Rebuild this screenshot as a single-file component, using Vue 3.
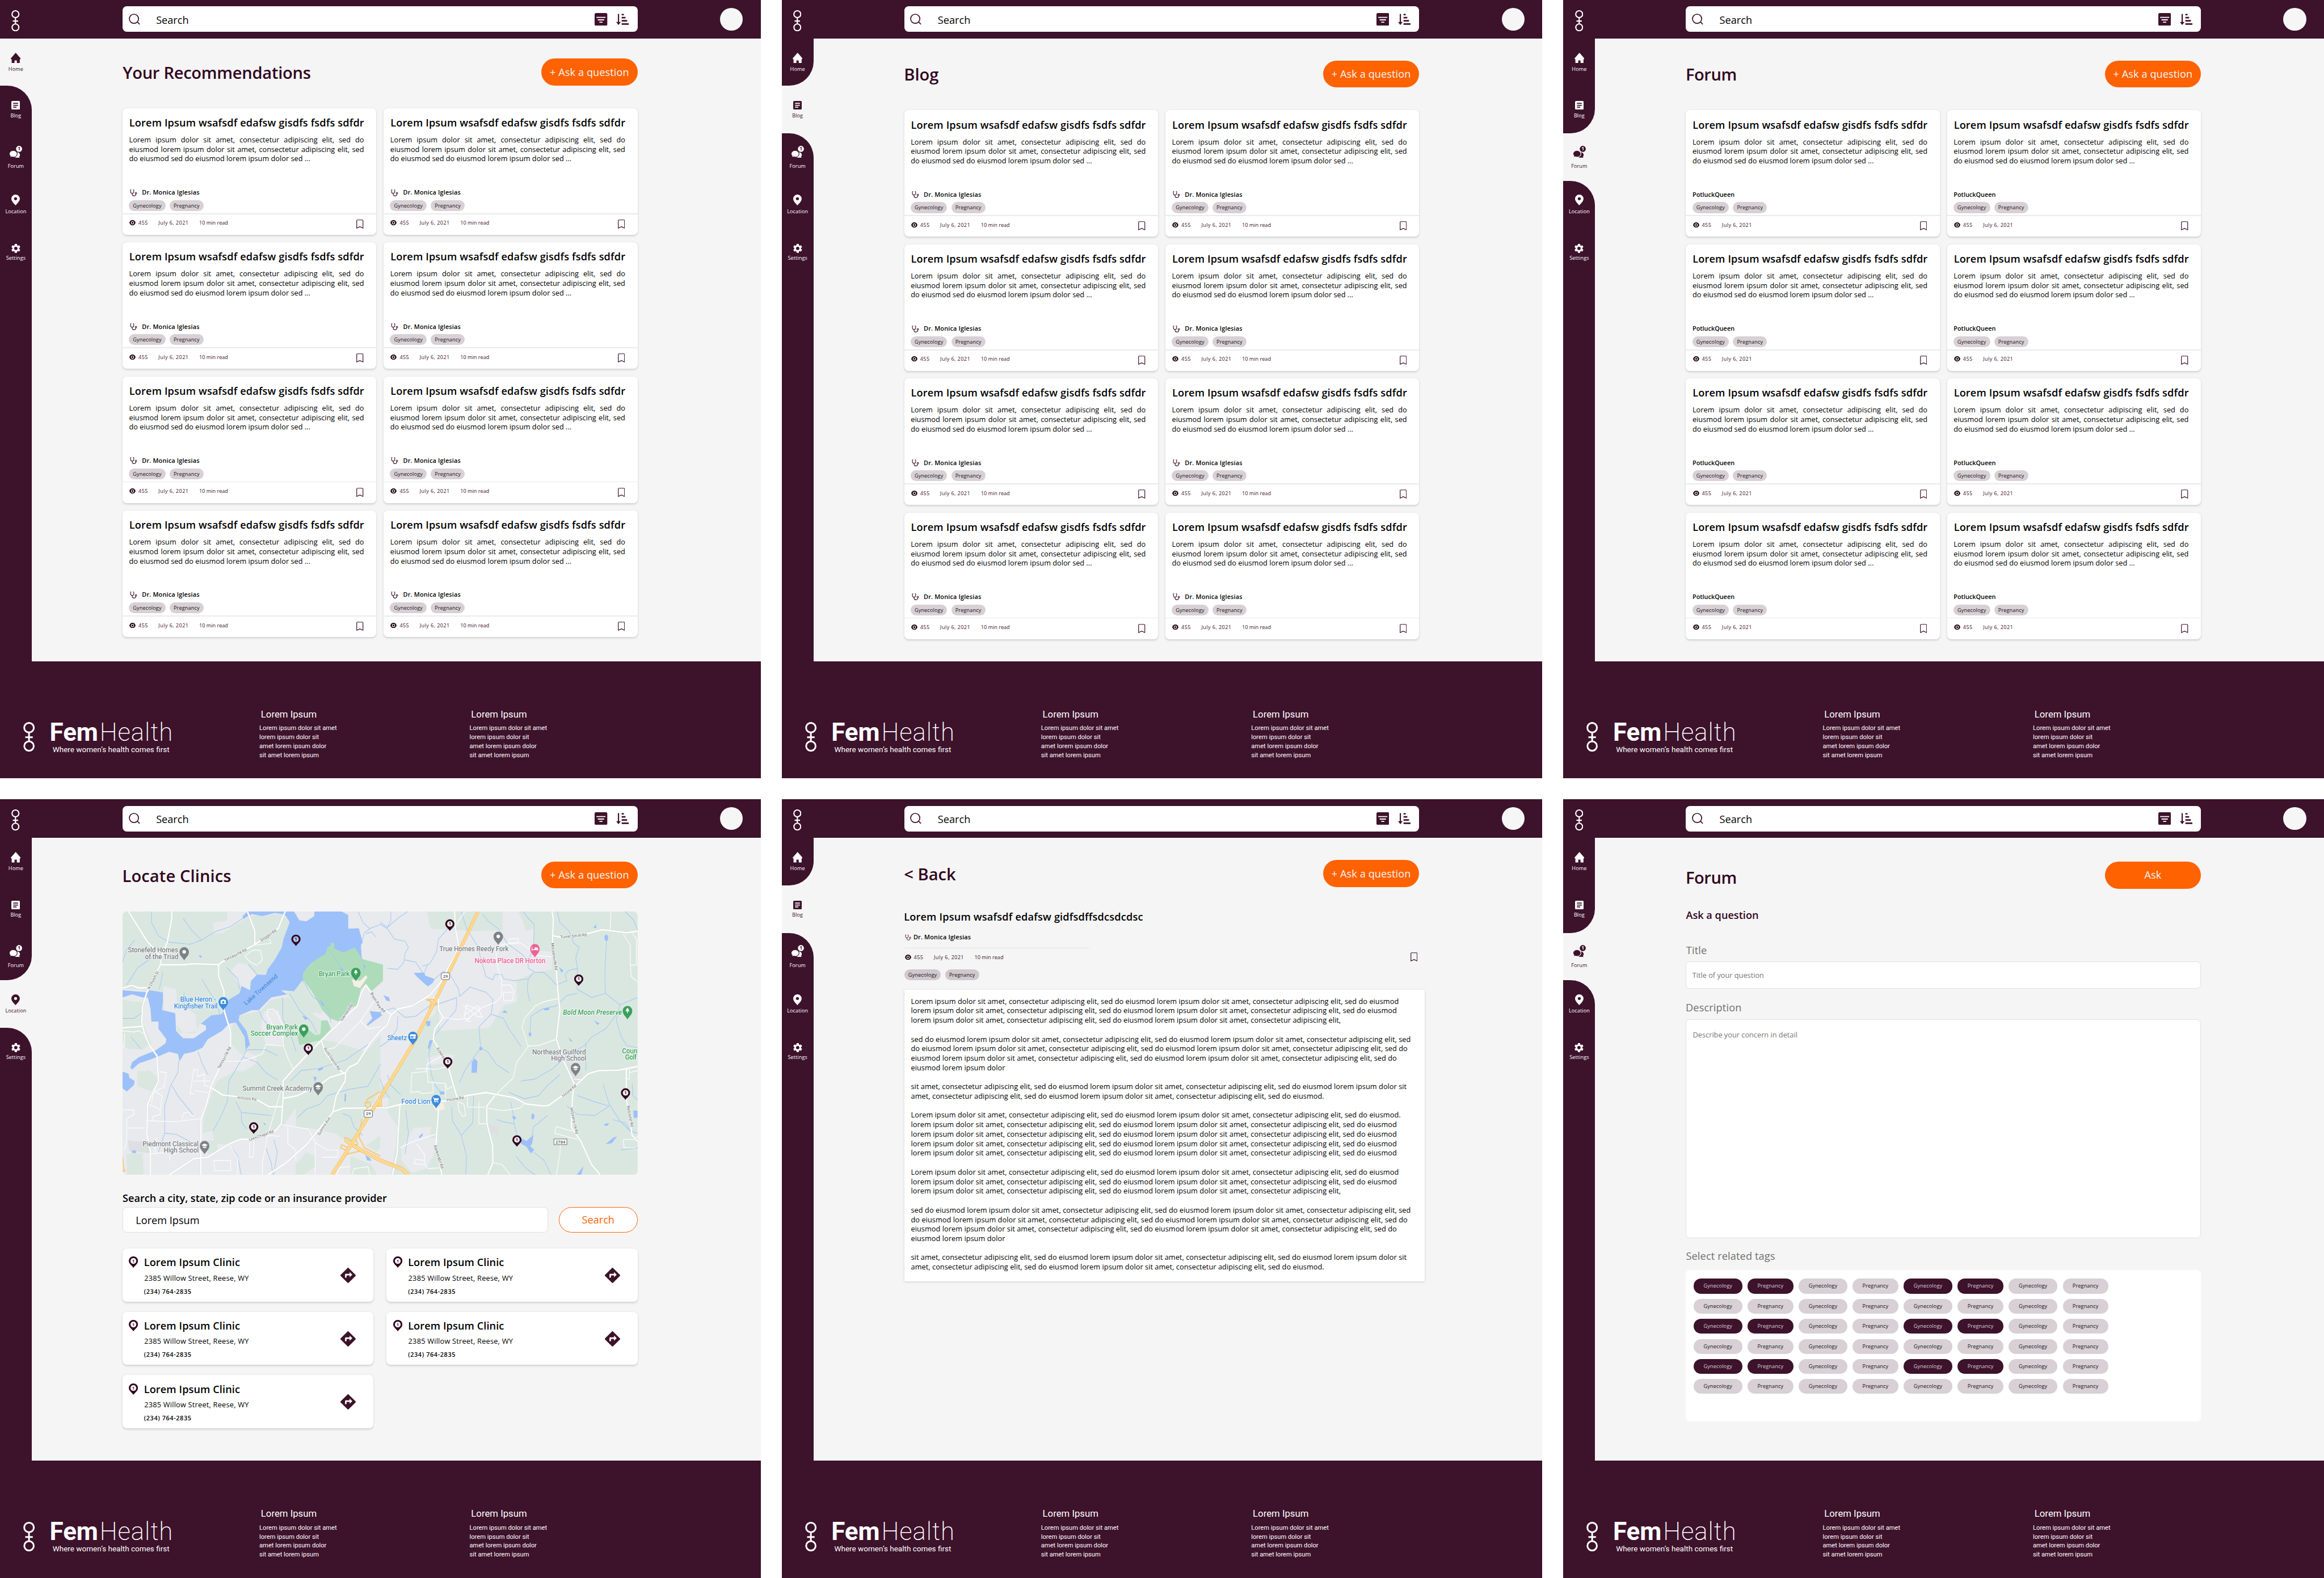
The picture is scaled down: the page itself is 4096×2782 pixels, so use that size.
<script setup>
const nav = [
  { key: 'home', label: 'Home' },
  { key: 'blog', label: 'Blog' },
  { key: 'forum', label: 'Forum' },
  { key: 'location', label: 'Location' },
  { key: 'settings', label: 'Settings' },
]

const screens = [
  { view: 'cards', active: 0, title: 'Your Recommendations', action: '+ Ask a question', doctor: true, mod: 'home' },
  { view: 'cards', active: 1, title: 'Blog', action: '+ Ask a question', doctor: true, mod: 'blog' },
  { view: 'cards', active: 2, title: 'Forum', action: '+ Ask a question', doctor: false, mod: 'forum' },
  { view: 'locate', active: 3, title: 'Locate Clinics', action: '+ Ask a question', mod: 'locate' },
  { view: 'article', active: 1, title: '< Back', action: '+ Ask a question', mod: 'article' },
  { view: 'ask', active: 2, title: 'Forum', action: 'Ask', mod: 'ask' },
]

const cardLines = [
  'Lorem ipsum dolor sit amet, consectetur adipiscing elit, sed do',
  'eiusmod lorem ipsum dolor sit amet, consectetur adipiscing elit, sed',
  'do eiusmod sed do eiusmod lorem ipsum dolor sed ...',
]

const core = 'ipsum dolor sit amet, consectetur adipiscing elit,'
const blockA = [
  `Lorem ${core} sed do eiusmod lorem ${core} sed do eiusmod`,
  `lorem ${core} sed do eiusmod lorem ${core} sed do eiusmod`,
  `lorem ${core} sed do eiusmod lorem ${core}`,
]
const blockB = [
  `sed do eiusmod lorem ${core} sed do eiusmod lorem ${core} sed`,
  `do eiusmod lorem ${core} sed do eiusmod lorem ${core} sed do`,
  `eiusmod lorem ${core} sed do eiusmod lorem ${core} sed do`,
  'eiusmod lorem ipsum dolor',
]
const blockC = [
  `sit amet, consectetur adipiscing elit, sed do eiusmod lorem ${core} sed do eiusmod lorem ipsum dolor sit`,
  `amet, consectetur adipiscing elit, sed do eiusmod lorem ${core} sed do eiusmod.`,
]
const blockD = [`${blockA[0]}.`, blockA[1], blockA[1], blockA[1], blockA[1]]
const article = [blockA, blockB, blockC, blockD, blockA, blockB, blockC].map((b) => b.join('\n'))

const clinics = 5
const tagRows = 6
const isPicked = (row, col) => row % 2 === 0 && col % 4 < 2

const footerLinks = ['Lorem ipsum dolor sit amet', 'lorem ipsum dolor sit', 'amet lorem ipsum dolor', 'sit amet lorem ipsum']

/* The map is drawn on a survey grid; these turn grid units into map pixels. */
const mx = (x) => x / 3 - 12
const my = (y) => y * 0.39541 - 106
const at = (x, y, r = 0) => `translate(${mx(x).toFixed(1)} ${my(y).toFixed(1)}) rotate(${r})`

const green = [
  'M36 268H630V312L552 320 552 372 600 374 720 310 760 290 970 275 985 320 955 400 945 450 860 545 850 572 800 570 765 640 710 625 700 660 640 690 600 760 545 765 480 800 450 850 350 850 335 755 260 740 265 655 190 650 100 640 36 640Z',
  'M36 690 90 700 160 700 140 780 200 900 150 930 60 925 36 890Z',
  'M120 1035 190 1030 232 1060 232 1090 200 1130 120 1105Z',
  'M60 1430 150 1425 155 1530 60 1530Z',
  'M700 765 820 745 880 690 970 680 1130 690 1120 760 1180 800 1165 885 1230 890 1420 940 1500 860 1500 1120 1440 1220 1330 1380 1240 1330 1130 1310 1020 1300 1020 1210 950 1290 900 1320 780 1360 700 1360 640 1385 560 1380 545 1320 490 1330 500 1240 570 1080 680 1030 720 960 650 900 655 820Z',
  'M520 1365 575 1365 575 1420 520 1430Z',
  'M1765 268H2195V358L2025 362 1785 350Z',
  'M2285 268H2961V1530H1560L1590 1380 1600 1300 1540 1230 1550 1160 1500 1160 1600 1010 1760 790 1810 760 1830 690 1840 840 2120 825 2200 720 2275 700 2275 600 2370 560 2475 545 2475 460 2370 455 2370 350 2330 362Z',
  'M1500 1170 1560 1150 1600 1120 1600 1060 1500 1110Z',
  'M1500 1340 1500 1400 1480 1420 1420 1390Z',
  'M1020 1480 1080 1420 1130 1440 1130 1490 1060 1530 1020 1530Z',
  'M1330 1440 1450 1480 1480 1530 1330 1530Z',
  'M1060 600 1100 650 1130 690 1170 740 1160 760 1090 740 1000 690 960 660Z',
]
const gray = [
  'M268 625 340 640 345 700 450 760 460 840 380 850 270 740Z',
  'M690 515 740 520 800 575 765 640 700 620 650 555Z',
  'M690 960 750 940 800 960 790 1000 720 1035 680 1030Z',
  'M1690 1305 1790 1300 1780 1350 1830 1360 1800 1440 1760 1500 1680 1520 1620 1460 1620 1400Z',
  'M1500 1230 1550 1240 1600 1310 1560 1360 1500 1350Z',
  'M1765 970 1850 950 1925 955 1900 990 1770 1005Z',
  'M840 745 920 740 950 810 950 905 850 905 820 820Z',
]
const pale = ['M65 1365 195 1375 190 1425 75 1415Z', 'M2555 985 2650 1050 2600 1095 2560 1030Z', 'M2115 1288 2170 1300 2170 1335 2115 1330Z']

const lake =
  'M718 290 745 268H1010L1040 310 1080 315 1125 290V268H1280L1318 285V350L1378 348 1400 415 1390 430 1395 500 1390 560 1300 620 1150 600 1055 600 1010 650 935 645 970 665 880 680 810 740 770 740 700 765 695 790 740 840 760 905 735 930 730 870 680 800 640 805 600 840 520 880 490 920 440 940 385 950 360 985 350 950 300 940 245 960 200 975 130 995 90 1025 80 1015 90 990 130 965 220 935 280 900 285 880 240 830 240 795 200 795 195 735 180 680 150 680 90 665 36 680V645L100 650 180 655 190 645 265 655 265 705 260 740 335 755 340 840 380 875 440 875 510 835 510 815 480 805 540 765 600 760 640 690 700 660 712 625 760 645 765 600 800 570 850 572 860 545 900 500 940 440 950 400 985 320 965 290 945 280 900 275 830 290 770 280 720 305Z'
const ponds = [
  'M36 1035 70 1045 75 1065 105 1080 100 1100 60 1130 36 1115Z',
  'M1422 810 1455 780 1440 745 1500 750 1510 765 1460 795 1430 815Z',
  'M1690 562 1750 560 1755 575 1810 592 1795 612 1770 627 1740 605 1705 578Z',
  'M2290 1350 2330 1367 2370 1338 2362 1380 2352 1392 2375 1410 2355 1427 2330 1395 2300 1380Z',
  'M2020 990 2035 972 2052 985 2048 1040 2018 1040Z',
  'M2773 385 2785 377 2795 390 2790 410 2775 405Z',
  'M2780 1382 2815 1378 2845 1345 2825 1350Z',
  'M2615 1530 2655 1487 2640 1530Z',
  'M2937 1222 2961 1222V1255L2940 1257Z',
  'M1780 885 1797 885 1775 930 1770 920Z',
  'M1758 794 1785 792 1783 815 1765 818Z',
  'M1518 668 1550 680 1555 698 1535 695Z',
  'M2190 752 2208 740 2225 755Z',
  'M2425 735 2460 728 2460 738 2435 742Z',
  'M2712 790 2745 803 2735 812Z',
  'M2568 870 2592 888 2580 890Z',
  'M2344 848 2358 848 2356 866 2343 864Z',
  'M1415 1435 1440 1448 1450 1462 1425 1460Z',
  'M1145 1022 1175 1012 1172 1025 1150 1032Z',
  'M1120 1058 1140 1062 1128 1085Z',
  'M1055 765 1090 778 1075 788Z',
  'M1160 690 1185 720 1165 715Z',
  'M1270 535 1290 545 1285 565Z',
  'M1402 524 1418 528 1410 542Z',
  'M88 1414 112 1412 112 1426 90 1424Z',
  'M467 480 485 478 483 492Z',
  'M835 1280 850 1285 842 1293Z',
  'M1298 1140 1306 1142 1304 1180 1296 1176Z',
  'M1835 1130 1860 1130 1868 1142 1842 1146Z',
  'M1720 1345 1742 1328 1740 1342 1722 1356Z',
  'M2360 1235 2375 1240 2373 1262 2358 1262Z',
  'M2248 1250 2262 1247 2272 1258 2260 1266Z',
  'M2772 1285 2798 1282 2792 1294 2775 1294Z',
  'M2710 345 2725 330 2728 348Z',
  'M2515 535 2540 550 2530 562Z',
  'M2062 918 2078 916 2078 932 2064 932Z',
]
const park =
  'M1060 565 1100 520 1150 490 1190 470 1200 440 1218 430 1222 416 1238 420 1238 445 1290 465 1355 440 1385 480 1395 495 1460 510 1515 522V600L1490 620 1450 650 1418 615 1390 640 1372 715 1320 740 1265 795 1215 780 1170 740 1110 650 1060 595Z'
const soccer = 'M1028 860 1080 825 1130 860 1160 855 1165 790 1200 790 1220 830 1160 885 1040 907Z'
const sands = ['M1338 592 1385 600 1418 573 1427 583 1385 635 1350 625Z', 'M1800 1180 1860 1185 1865 1215 1820 1225 1798 1200Z']

const streams = [
  '200,268 200,320 240,385 300,415 420,425 485,405 560,365 650,340 720,300',
  '380,300 430,360 485,405',
  '36,510 60,450 105,405',
  '60,620 120,540 200,490 240,475',
  '265,560 245,640',
  '36,780 100,780 150,750',
  '85,870 140,925',
  '485,590 520,640 560,690 590,760',
  '625,535 690,590 700,640',
  '750,520 800,570',
  '385,655 385,720',
  '740,930 720,965 640,1080 630,1180 600,1240 550,1320',
  '740,930 850,930 920,960',
  '720,965 800,990 850,1040 915,1075',
  '680,1180 710,1230 880,1245',
  '710,1230 712,1275 740,1310',
  '355,985 350,1040 310,1100 275,1200 275,1330 240,1420',
  '315,1100 350,1150 435,1240',
  '275,1330 340,1335 420,1370',
  '990,1080 1050,1030 1150,1020 1300,980 1440,900',
  '1030,1255 1080,1215 1160,1190 1200,1150 1320,1120 1430,1105 1500,1000',
  '465,940 490,1000 520,1050',
  '1060,600 1120,680 1180,710 1210,760 1220,800',
  '945,680 945,780 1000,880 1022,940',
  '985,660 1040,740 1110,800 1140,850',
  '810,740 830,780 880,830',
  '1200,450 1240,490 1290,550',
  '1390,480 1410,530 1405,560',
  '1375,268 1400,320 1440,350 1500,330',
  '1440,350 1410,370 1395,410',
  '1420,375 1450,365 1475,390',
  '655,1400 690,1440 710,1530',
  '850,1400 880,1470 890,1530',
  '895,1360 915,1420 895,1530',
  '1285,1235 1330,1250 1350,1300 1400,1340',
  '1500,330 1540,350 1580,400 1640,410 1660,440 1640,470 1635,510 1600,545 1540,540',
  '1560,268 1560,310 1540,345 1500,320',
  '1540,345 1600,300 1655,268',
  '1640,500 1700,510 1740,560',
  '1770,520 1750,560',
  '1895,340 1830,400 1820,460 1780,520 1740,530',
  '1810,590 1860,555 1900,575 1945,640 1950,675 2010,630 2100,655 2140,690 2130,760 2060,820 2070,920 2110,940 2160,1000 2230,1040',
  '1960,268 1990,350 2050,430 2080,520 2100,580 2140,595 2150,570 2190,570 2200,590 2260,600 2340,590 2370,560',
  '2080,280 2120,320 2170,350 2220,420 2300,470 2340,500 2340,540 2380,560 2430,560 2470,590 2500,620 2560,600 2550,570 2570,550 2620,540 2610,490 2630,440 2600,420 2570,360 2520,320 2505,268',
  '2310,268 2340,300 2375,330 2370,450 2340,500',
  '2340,590 2335,640 2348,700',
  '2620,540 2618,640 2700,680 2780,660 2860,715 2961,680',
  '2780,660 2775,580 2785,400',
  '2860,715 2840,790 2870,870 2900,910 2961,920',
  '2860,740 2780,830 2700,870 2660,910 2560,960 2480,1020 2380,1070 2300,1080',
  '2350,850 2355,770 2420,735 2500,720 2560,670 2620,660',
  '1500,750 1575,730 1640,775 1700,770 1780,720 1850,705 1935,680',
  '1935,680 1930,740 1800,870 1775,950 1790,1050 1810,1100 1850,1140',
  '1600,770 1595,830 1560,880 1500,915',
  '2130,760 2200,780 2230,830 2300,915',
  '2070,920 1980,1030 1950,1090',
  '1905,1205 1910,1270 1960,1340 1990,1440 1985,1530',
  '2030,1150 2025,1280 1960,1340',
  '2160,1265 2200,1275 2260,1285 2280,1350',
  '2240,1180 2255,1240 2260,1285',
  '2450,1245 2370,1300 2360,1360',
  '2230,1135 2320,1165 2400,1150 2450,1100 2520,1050',
  '2560,1200 2620,1240 2720,1245 2800,1200',
  '2620,1150 2720,1180 2800,1200',
  '2765,1095 2800,1190 2860,1270 2920,1320 2961,1330',
  '2270,1440 2330,1500 2380,1530',
  '2370,1420 2430,1460 2470,1530',
  '2930,1090 2935,1150 2961,1170',
  '2820,1265 2890,1280 2930,1330',
  '2865,1410 2961,1400',
  '1645,1220 1660,1330 1640,1430',
  '2890,268 2940,310 2961,355',
  '1500,1070 1520,1120 1555,1165',
  '1540,1050 1560,1100 1615,1145',
  '2668,900 2668,1030',
]

const minor = [
  '36,840 95,845 130,840 160,855 165,870',
  '36,915 45,915 48,850',
  '620,985 720,985 800,960 830,950 850,905 950,912 980,980 1005,1020',
  '950,912 945,810 910,750 890,735 860,738 858,765 900,830 950,870',
  '730,480 760,510 800,525 830,500 820,455 780,452 730,480',
  '780,430 880,420 870,400',
  '180,1190 250,1215 250,1240 210,1250 205,1275',
  '245,1035 285,1040 270,1110 215,1130 200,1185',
  '215,1130 260,1150 252,1215',
  '440,1140 420,1140 440,1025 460,1025 460,1060 500,1045 502,1100 540,1110',
  '440,1080 535,1080',
  '445,1125 520,1135',
  '175,1270 330,1275 480,1260',
  '375,1265 380,1235 410,1228 435,1250',
  '36,1218 100,1218 102,1238 60,1260 60,1370 45,1410',
  '60,1305 165,1305',
  '220,1430 220,1380 230,1350',
  '190,1430 300,1420 340,1430',
  '305,1460 305,1420',
  '940,1290 1020,1300 1090,1310 1130,1370 1130,1530',
  '975,1300 975,1380 1020,1410 1020,1460',
  '830,1530 830,1470 860,1340 930,1345',
  '640,1382 690,1450 690,1530',
  '760,1365 755,1445 780,1445 782,1365',
  '555,1460 650,1460 650,1510 560,1510 555,1460',
  '1130,1375 1200,1410 1260,1410 1255,1445 1170,1445',
  '1390,790 1300,870 1240,920 1190,930',
  '1390,790 1470,690',
  '1385,790 1430,830 1500,820',
  '1250,1530 1270,1495 1330,1490',
  '1340,1530 1350,1500 1430,1490 1440,1530',
  '860,1340 910,1200 950,1080',
  '1858,775 1930,785 2010,780',
  '1970,715 2050,770 2080,775 2060,740 1990,715 1975,780',
  '1975,765 2050,720 2070,735 1985,790 2015,795',
  '2155,440 2165,530 2190,600 2190,670 2160,700 2060,735',
  '2155,440 2200,425 2300,420 2350,450 2400,480 2475,485',
  '2230,420 2235,400 2285,397 2285,415 2230,420',
  '2190,620 2240,620 2260,650 2250,695 2200,695 2200,650',
  '2200,655 2255,655',
  '2510,685 2430,700 2380,720 2320,780 2305,820 2340,915 2275,990 2255,1065 2150,1150',
  '2340,912 2400,910 2500,880',
  '1672,1135 1680,1040 1760,1035 1762,1020 1700,1022',
  '1672,1135 1710,1130 1740,1140 1800,1135 1800,1080',
  '1770,1085 1870,1092 1880,1120 1910,1105',
  '1770,1020 1800,1025 1870,1015',
  '1770,1085 1765,1000 1850,960',
  '1870,1092 1870,1160',
  '1995,1155 1995,1205 2100,1205',
  '2060,1180 2060,1285 2105,1285',
  '1940,1180 1945,1220 1970,1250 1985,1245 1975,1190 1940,1180',
  '2105,1210 2200,1222 2290,1210 2320,1190',
  '2490,1330 2500,1298 2590,1320',
  '2490,1330 2620,1360',
  '2525,1355 2520,1430 2500,1530',
  '1610,1400 1700,1365 1815,1335',
  '1705,1380 1750,1430 1755,1480 1690,1475 1700,1455 1750,1460',
  '1755,1480 1770,1500 1850,1495',
  '2810,268 2805,355',
  '2880,375 2920,430 2920,520 2925,580 2961,605',
  '2920,525 2955,525 2955,400 2930,370',
  '2897,1020 2915,1025 2915,1070 2897,1070',
  '2915,1040 2961,1030',
  '2880,1360 2940,1360 2961,1345',
  '2880,1360 2885,1400 2950,1400',
  '2600,1070 2650,1075',
  '2140,1470 2190,1480 2240,1530',
  '1925,340 1980,268',
]
const major = [
  '316,268 316,300 290,415 262,470 250,525 180,640 150,720 145,800 160,850 190,910 232,960 240,1080 178,1190 175,1340 195,1420 195,1530',
  '70,268 175,410 245,475',
  '960,268 920,350 780,430 600,510 582,522 582,580 612,650 612,740 650,845 650,910 540,1100 510,1200 482,1260 480,1530',
  '250,523 380,523 440,518 582,522',
  '745,268 787,360 787,425',
  '36,635 90,622 130,635 185,632',
  '36,825 150,818',
  '540,1112 605,1147 690,1155 800,1170 868,1203 948,1203',
  '300,1530 440,1452 520,1445 640,1382 700,1360 780,1358 905,1318 938,1285 948,1160 948,1080 1010,1020 1165,885 1370,720 1390,660 1418,620 1500,720 1565,765',
  '1165,885 1185,940 1240,1005 1290,1042',
  '860,1530 960,1475 1080,1385 1230,1230 1250,1150 1300,1080 1303,1040 1320,1015 1370,995 1440,900 1500,840 1540,810 1560,765 1600,735 1680,720 1780,670 1840,610 1930,470 1945,430 1925,340 1922,268',
  '950,1163 1030,1150 1170,1090 1215,1062 1303,1040',
  '1230,1228 1290,1210 1540,1208 1620,1190 1800,1180 1880,1175 1990,1150 2100,1135 2260,1160 2330,1190 2430,1200 2460,1195 2600,1110 2680,1045 2740,1030 2850,1028 2961,1010',
  '2475,268 2483,300 2478,420 2495,500 2510,660 2520,740 2500,880 2540,980 2600,1090 2590,1180 2585,1300 2640,1370 2700,1480 2750,1530',
  '2483,385 2530,392 2650,380 2760,355 2900,370 2961,362',
  '1800,680 1830,690 1832,740 1858,775 1810,830 1800,880 1850,950 1885,1010 1940,1170',
  '1832,1210 1815,1390 1850,1530',
  '1612,1190 1595,1430 1568,1530',
  '2110,1530 2140,1470 2138,1390 2105,1280 2105,1200 2150,1150',
  '2897,1020 2897,1160 2930,1340 2961,1370',
]
const highway = [
  '2055,268 1930,490 1800,715 1700,880 1500,1160 1440,1240 1330,1390 1225,1530',
  '1500,1150 1500,1205',
  '1310,1370 1400,1415 1500,1460 1620,1500 1660,1530',
]
const ramps = [
  'M1500 1130 1430 1165 1412 1190 1425 1210 1445 1200 1440 1180 1420 1185',
  'M1500 1170 1475 1180 1480 1200 1500 1195',
  'M1350 1370 1300 1350 1300 1370 1340 1385 1370 1385 1365 1365 1345 1362',
  'M1320 1400 1280 1385 1275 1400 1300 1410 1335 1395',
  'M1395 1260 1380 1350 1410 1400 1500 1440',
  'M1270 1480 1310 1430 1400 1412',
  'M1760 690 1800 690 1825 712 1780 730 1790 700 1760 690',
  'M36 1440 42 1500 50 1510 36 1510',
]

const places = [
  [66, 464, 286, 'Stonefeld Homes', 'slate'],
  [163, 496, 190, 'of the Triad', 'slate'],
  [363, 701, 203, 'Blue Heron -', 'azure'],
  [328, 732, 247, 'Kingfisher Trail', 'azure'],
  [1150, 579, 176, 'Bryan Park', 'leaf'],
  [852, 832, 180, 'Bryan Park', 'leaf'],
  [763, 864, 270, 'Soccer Complex', 'leaf'],
  [717, 1126, 397, 'Summit Creek Academy', 'slate'],
  [150, 1393, 318, 'Piedmont Classical', 'slate'],
  [270, 1424, 199, 'High School', 'slate'],
  [1835, 457, 394, 'True Homes Reedy Fork', 'slate'],
  [2036, 516, 402, 'Nokota Place DR Horton', 'rose'],
  [2538, 762, 334, 'Bold Moon Preserve', 'leaf slant'],
  [2363, 952, 305, 'Northeast Guilford', 'slate'],
  [2470, 983, 200, 'High School', 'slate'],
  [2873, 946, 87, 'Coun', 'leaf'],
  [2890, 977, 66, 'Golf', 'leaf'],
  [1539, 884, 112, 'Sheetz', 'azure'],
  [1619, 1188, 165, 'Food Lion', 'azure'],
]
const roadNames = [
  [190, 642, 37.6, -62, 'N Church St'],
  [617, 507, 46.5, -26, 'Yanceyville Rd'],
  [825, 412, 35, -34, 'Doggett Rd'],
  [588, 1022, 45.6, -62, 'Yanceyville Rd'],
  [688, 1165, 36, 6, 'Hillcroft Rd'],
  [757, 1367, 48.7, -19, 'Lees Chapel Rd'],
  [1280, 797, 39.6, -55, 'Townsend Rd'],
  [1443, 660, 34, 60, 'Bryan Park'],
  [1178, 925, 50, 56, 'Rudd Station Rd'],
  [1155, 1342, 39, -58, 'Summit Ave'],
  [2523, 397, 50, -5, 'Turner Smith Rd'],
  [2470, 420, 52, 82, 'McLeansville Rd'],
  [2578, 1208, 51, 78, 'McLeansville Rd'],
  [1878, 1177, 32.5, -8, 'Hicone Rd'],
  [2540, 1158, 32.7, -40, 'Hicone Rd'],
  [1818, 925, 26, 56, 'Eckerso'],
  [2900, 1200, 40.5, 79, 'Redcedar Rd'],
  [1803, 1390, 45.7, 72, 'Rankin Mill Rd'],
  [1500, 738, 9, 40, 'Rd'],
]
const pois = [
  [386, 503, 'slate', 'dot'],
  [608, 742, 'azure', 'camera'],
  [1361, 602, 'leaf', 'tree'],
  [1065, 873, 'leaf', 'dot'],
  [1147, 1150, 'slate', 'school'],
  [502, 1431, 'slate', 'school'],
  [2170, 429, 'slate', 'dot'],
  [2378, 488, 'rose', 'bed'],
  [2904, 785, 'leaf', 'tree'],
  [2609, 1058, 'slate', 'school'],
  [1685, 908, 'azure', 'shop'],
  [1817, 1211, 'azure', 'cart'],
]
const pins = [[1021, 434], [1091, 956], [781, 1333], [1895, 361], [2627, 625], [1883, 1021], [2276, 1395], [2893, 1170]]
</script>

<template>
  <div class="board">
    <section v-for="(s, si) in screens" :key="si" class="screen">
      <header class="topbar">
        <svg class="topbar__logo" viewBox="0 0 15.6 40">
          <g fill="none" stroke="currentColor" stroke-width="2.3">
            <circle cx="7.8" cy="7.6" r="6.5" /><circle cx="7.8" cy="32.5" r="6.4" />
            <path d="M7.8 14.5V26M2.7 20.5H12.9" />
          </g>
        </svg>
        <div class="search">
          <svg class="search__glass" viewBox="0 0 22 22">
            <g fill="none" stroke="currentColor" stroke-width="1.9"><circle cx="10" cy="10" r="8.9" /><path d="M16.8 16.4 21 20.8" /></g>
          </svg>
          <span class="search__text">Search</span>
          <svg class="search__filter" viewBox="0 0 24 24">
            <rect width="24" height="24" rx="2.6" fill="currentColor" />
            <path d="M3.4 8.2H20.6M6 12.9H18M9 17.4H15" stroke="#fff" stroke-width="2" />
          </svg>
          <svg class="search__sort" viewBox="0 0 24 22">
            <path d="M4.4 .6V17" stroke="currentColor" stroke-width="2.3" />
            <path d="M0 15.8H8.8L4.4 21.6Z" fill="currentColor" />
            <path d="M10.4 1.9H14.6M10.4 7.7H17.6M10.4 13.6H20.8M10.4 19.8H23.8" stroke="currentColor" stroke-width="2.8" />
          </svg>
        </div>
        <div class="avatar"></div>
      </header>

      <div class="body">
        <nav class="side">
          <div
            v-for="(n, i) in nav"
            :key="n.key"
            class="tab"
            :class="[`tab--${n.key}`, { 'is-active': i === s.active, 'is-before': i === s.active - 1, 'is-after': i === s.active + 1 }]"
          >
            <svg v-if="n.key === 'home'" width="18.7" height="20" viewBox="0 0 18.7 20">
              <path d="M9.35 0 18.7 10.8 18.2 12H17V20H11.5V15.2Q11.5 14.4 10.8 14.4H7.8Q7.1 14.4 7.1 15.2V20H1.7V12H.5L0 10.8Z" fill="currentColor" />
            </svg>
            <svg v-else-if="n.key === 'blog'" width="16.2" height="16.2" viewBox="0 0 16.2 16.2">
              <rect width="16.2" height="16.2" rx="2" fill="currentColor" />
              <path class="cut" d="M3.5 4.5H12.8M3.5 8.1H12.8M3.5 11.7H9.8" />
            </svg>
            <svg v-else-if="n.key === 'forum'" width="25" height="23.5" viewBox="0 0 25 23.5">
              <path d="M14.5 12.4C18 12.2 20.6 14.4 20.6 17.2 20.6 18.6 20 19.8 19.2 20.5L20.2 22.9 16.8 22.2C13.4 23 10.2 22 9 20.2Z" fill="currentColor" />
              <path class="bubble" d="M7.9 8.9C12.3 8.9 15.4 11.6 15.4 15.2S12.3 21.5 7.9 21.5C6.8 21.5 5.8 21.3 4.9 21L1.5 21.9 2.3 19.3C1.1 18.2.4 16.8.4 15.2.4 11.6 3.5 8.9 7.9 8.9Z" />
              <circle cx="18.9" cy="5.8" r="5.7" fill="currentColor" />
              <text class="badge" x="18.9" y="9">1</text>
            </svg>
            <svg v-else-if="n.key === 'location'" width="16" height="20.3" viewBox="0 0 16 20.3">
              <path fill-rule="evenodd" d="M8 0a8 8 0 0 1 8 8c0 4-4.6 8.8-8 12.3C4.6 16.8 0 12 0 8a8 8 0 0 1 8-8Zm0 5a2.9 2.9 0 1 0 0 5.8A2.9 2.9 0 0 0 8 5Z" fill="currentColor" />
            </svg>
            <svg v-else width="17" height="17" viewBox="2.4 2.4 19.2 19.2">
              <path fill="currentColor" d="M19.14 12.94c.04-.3.06-.61.06-.94 0-.32-.02-.64-.07-.94l2.03-1.58c.18-.14.23-.41.12-.61l-1.92-3.32c-.12-.22-.37-.29-.59-.22l-2.39.96c-.5-.38-1.03-.7-1.62-.94l-.36-2.54c-.04-.24-.24-.41-.48-.41h-3.84c-.24 0-.43.17-.47.41l-.36 2.54c-.59.24-1.13.57-1.62.94l-2.39-.96c-.22-.08-.47 0-.59.22L2.74 8.87c-.12.21-.08.47.12.61l2.03 1.58c-.05.3-.09.63-.09.94s.02.64.07.94l-2.03 1.58c-.18.14-.23.41-.12.61l1.92 3.32c.12.22.37.29.59.22l2.39-.96c.5.38 1.03.7 1.62.94l.36 2.54c.05.24.24.41.48.41h3.84c.24 0 .44-.17.47-.41l.36-2.54c.59-.24 1.13-.56 1.62-.94l2.39.96c.22.08.47 0 .59-.22l1.92-3.32c.12-.22.07-.47-.12-.61l-2.01-1.58zM12 15.6c-1.98 0-3.6-1.62-3.6-3.6s1.62-3.6 3.6-3.6 3.6 1.62 3.6 3.6-1.62 3.6-3.6 3.6z" />
            </svg>
            <span class="tab__label">{{ n.label }}</span>
          </div>
          <div class="side__rest"></div>
        </nav>

        <main class="page" :class="`page--${s.mod}`">
          <div class="head">
            <h1>{{ s.title }}</h1>
            <button class="cta">{{ s.action }}</button>
          </div>

          <div v-if="s.view === 'cards'" class="cards">
            <article v-for="c in 8" :key="c" class="card">
              <h2>Lorem Ipsum wsafsdf edafsw gisdfs fsdfs sdfdr</h2>
              <div class="excerpt">
                <p v-for="l in cardLines" :key="l">{{ l }}</p>
              </div>
              <div class="author">
                <svg v-if="s.doctor" class="steth" viewBox="0 0 14 13.4">
                  <g fill="none" stroke="currentColor" stroke-width="1.15">
                    <path d="M2.7 .8H1.2V4.3A3.05 3.05 0 0 0 7.3 4.3V.8H5.8M4.25 7.3V9A3.5 3.5 0 0 0 11.2 9.3V8.6" />
                    <circle cx="11.4" cy="7.1" r="1.5" />
                  </g>
                </svg>
                <span>{{ s.doctor ? 'Dr. Monica Iglesias' : 'PotluckQueen' }}</span>
              </div>
              <div class="tags"><span class="tag tag--g">Gynecology</span><span class="tag tag--p">Pregnancy</span></div>
              <hr />
              <div class="meta">
                <svg class="eye" viewBox="0 0 12 10"><path d="M6 0C3 0 1 2 0 5c1 3 3 5 6 5s5-2 6-5C11 2 9 0 6 0Z" fill="#1f0616" /><circle cx="6" cy="5" r="2.4" fill="none" stroke="#fff" stroke-width="1.2" /></svg>
                <span class="meta__views">455</span>
                <span class="meta__date">July 6, 2021</span>
                <span v-if="s.doctor" class="meta__read">10 min read</span>
                <svg class="mark" viewBox="0 0 13.4 17.4"><path d="M.8 16.4V2.2Q.8 .8 2.2 .8H11.2Q12.6 .8 12.6 2.2V16.4L6.7 13.6Z" fill="none" stroke="currentColor" stroke-width="1.3" stroke-linejoin="round" /></svg>
              </div>
            </article>
          </div>

          <template v-else-if="s.view === 'locate'">
            <svg class="map" viewBox="0 0 975 499">
              <rect width="975" height="499" fill="#e8eaed" />
              <g transform="translate(-12 -106) scale(.33333 .39541)" fill="none" stroke-linejoin="round">
                <path v-for="d in green" :key="d" :d="d" fill="#dae7e0" />
                <path v-for="d in gray" :key="d" :d="d" fill="#e8eaed" />
                <path v-for="d in pale" :key="d" :d="d" fill="#dddfe2" />
                <path :d="lake" fill="#9cc0f9" />
                <path :d="park" fill="#aedcba" />
                <path :d="soccer" fill="#aedcba" />
                <polyline v-for="p in streams" :key="p" :points="p" stroke="#a6c8f5" stroke-width="3.2" />
                <path v-for="d in ponds" :key="d" :d="d" fill="#9cc0f9" />
                <path v-for="d in sands" :key="d" :d="d" fill="#f5efe6" />
                <polyline v-for="p in minor" :key="p" :points="p" stroke="#fbfcfc" stroke-width="3.8" />
                <polyline v-for="p in major" :key="p" :points="p" stroke="#cfd6d4" stroke-width="9" />
                <polyline v-for="p in major" :key="p" :points="p" stroke="#fff" stroke-width="7.2" />
                <path v-for="d in ramps" :key="d" :d="d" stroke="#f6b94f" stroke-width="5.5" />
                <path v-for="d in ramps" :key="d" :d="d" stroke="#fee3ab" stroke-width="2" />
                <g v-for="(w, k) in [['#f9b441', 18], ['#fee3ab', 13], ['#f9b441', 2.2]]" :key="k">
                  <polyline v-for="p in highway" :key="p" :points="p" :stroke="w[0]" :stroke-width="w[1]" />
                </g>
              </g>
              <text class="lake" :transform="at(738, 718, -42)" textLength="81">Lake Townsend</text>
              <text v-for="(r, k) in roadNames" :key="`r${k}`" class="road" :transform="at(r[0], r[1], r[3])" :textLength="r[2]">{{ r[4] }}</text>
              <text v-for="(p, k) in places" :key="`p${k}`" class="place" :class="p[4]" :x="mx(p[0])" :y="my(p[1])" :textLength="p[2] / 3">{{ p[3] }}</text>
              <g v-for="x in [[1432, 1237], [1870, 578]]" :key="x[0]" :transform="at(x[0], x[1])">
                <rect x="-8" y="-6.5" width="16" height="13" rx="3.5" fill="#fff" stroke="#6c7075" stroke-width="1.1" />
                <text class="shield" x="0" y="3">29</text>
              </g>
              <g :transform="at(2523, 1371)">
                <rect x="-12.3" y="-5.3" width="24.6" height="10.6" fill="#fff" stroke="#6c7075" stroke-width="1.1" />
                <text class="shield" x="0" y="3">2784</text>
              </g>
              <g v-for="(p, k) in pois" :key="`i${k}`" :transform="at(p[0], p[1])" :class="p[2]">
                <path d="M0 .2C-1.2-4.5-9-8-9-16.5A9 9 0 0 1 9-16.5C9-8 1.2-4.5 0 .2Z" fill="currentColor" />
                <circle v-if="p[3] === 'dot'" cx="0" cy="-16.5" r="3.4" fill="#fff" />
                <path v-else-if="p[3] === 'school'" d="M0-20.5 6-17.5 0-14.5-6-17.5ZM-3.5-15 0-13.3 3.5-15V-13L0-11.3-3.5-13Z" fill="#fff" />
                <path v-else-if="p[3] === 'camera'" fill-rule="evenodd" d="M-5-19.5H-2.5L-1.5-21H1.5L2.5-19.5H5V-12.5H-5ZM0-18A2.2 2.2 0 1 0 .01-18Z" fill="#fff" />
                <path v-else-if="p[3] === 'bed'" d="M-6-20V-12.5H-5V-14H5V-12.5H6V-17.5L4-19H-.5V-15.5H-5V-20Z" fill="#fff" />
                <path v-else-if="p[3] === 'shop'" d="M-5-20.5H5L6-17H-6ZM-5-16.5H-3.8V-14H1V-16.5H5V-12.5H-5Z" fill="#fff" />
                <path v-else-if="p[3] === 'cart'" d="M-6-20.5H-4L-3.5-19H5.5L3.5-15H-2.5L-3-14H4V-13H-4.5L-3.5-15.5-5-19.5H-6ZM-3-12.5H-1V-11H-3ZM2-12.5H4V-11H2Z" fill="#fff" />
                <path v-else d="M0-22 3-18.5H1.8L4-15.5H.7V-12H-.7V-15.5H-4L-1.8-18.5H-3Z" fill="#fff" />
              </g>
              <g v-for="(p, k) in pins" :key="`k${k}`" :transform="at(p[0], p[1])">
                <path d="M0 0C-2-4-8.7-7.5-8.7-13.2A8.7 8.7 0 0 1 8.7-13.2C8.7-7.5 2-4 0 0Z" fill="#31051f" />
                <circle cx="0" cy="-13.2" r="5.3" :fill="k ? '#f3eef2' : '#a9c6f7'" />
                <text class="pin-no" x="0" y="-10.6">1</text>
              </g>
            </svg>
            <h3 class="label label--strong">Search a city, state, zip code or an insurance provider</h3>
            <div class="finder">
              <div class="field finder__field">Lorem Ipsum</div>
              <button class="ghost">Search</button>
            </div>
            <div class="clinics">
              <article v-for="c in clinics" :key="c" class="clinic">
                <svg class="clinic__pin" viewBox="0 0 17.4 21.7">
                  <path d="M8.7 21.7C6.7 17.7 0 14.4 0 8.7A8.7 8.7 0 0 1 17.4 8.7C17.4 14.4 10.7 17.7 8.7 21.7Z" fill="#31051f" />
                  <circle cx="8.7" cy="8.7" r="5.5" fill="#fff" />
                  <text class="pin-no" x="8.7" y="11.5">1</text>
                </svg>
                <div class="clinic__text">
                  <h4>Lorem Ipsum Clinic</h4>
                  <p class="clinic__addr">2385 Willow Street, Reese, WY</p>
                  <p class="clinic__tel">(234) 764-2835</p>
                </div>
                <svg class="clinic__go" viewBox="2 2 20 20">
                  <path fill="currentColor" d="M21.71 11.29l-9-9c-.39-.39-1.02-.39-1.41 0l-9 9c-.39.39-.39 1.02 0 1.41l9 9c.39.39 1.02.39 1.41 0l9-9c.39-.38.39-1.01 0-1.41zM14 14.5V12h-4v3H8v-4c0-.55.45-1 1-1h5V7.5l3.5 3.5-3.5 3.5z" />
                </svg>
              </article>
            </div>
          </template>

          <template v-else-if="s.view === 'article'">
            <h2 class="story__title">Lorem Ipsum wsafsdf edafsw gidfsdffsdcsdcdsc</h2>
            <div class="author author--story">
              <svg class="steth" viewBox="0 0 14 13.4">
                <g fill="none" stroke="currentColor" stroke-width="1.15">
                  <path d="M2.7 .8H1.2V4.3A3.05 3.05 0 0 0 7.3 4.3V.8H5.8M4.25 7.3V9A3.5 3.5 0 0 0 11.2 9.3V8.6" />
                  <circle cx="11.4" cy="7.1" r="1.5" />
                </g>
              </svg>
              <span>Dr. Monica Iglesias</span>
            </div>
            <hr class="story__rule" />
            <div class="meta meta--story">
              <svg class="eye" viewBox="0 0 12 10"><path d="M6 0C3 0 1 2 0 5c1 3 3 5 6 5s5-2 6-5C11 2 9 0 6 0Z" fill="#1f0616" /><circle cx="6" cy="5" r="2.4" fill="none" stroke="#fff" stroke-width="1.2" /></svg>
              <span class="meta__views">455</span>
              <span class="meta__date">July 6, 2021</span>
              <span class="meta__read">10 min read</span>
              <svg class="mark" viewBox="0 0 13.4 17.4"><path d="M.8 16.4V2.2Q.8 .8 2.2 .8H11.2Q12.6 .8 12.6 2.2V16.4L6.7 13.6Z" fill="none" stroke="currentColor" stroke-width="1.3" stroke-linejoin="round" /></svg>
            </div>
            <div class="tags tags--story"><span class="tag tag--g">Gynecology</span><span class="tag tag--p">Pregnancy</span></div>
            <div class="story">
              <p v-for="(b, k) in article" :key="k">{{ b }}</p>
            </div>
          </template>

          <template v-else>
            <h3 class="ask__sub">Ask a question</h3>
            <label class="label ask__l1">Title</label>
            <div class="field ask__title">Title of your question</div>
            <label class="label ask__l2">Description</label>
            <div class="field ask__desc">Describe your concern in detail</div>
            <label class="label ask__l3">Select related tags</label>
            <div class="picker">
              <template v-for="r in tagRows" :key="r">
                <span v-for="c in 8" :key="c" class="chip" :class="{ 'is-picked': isPicked(r - 1, c - 1) }">{{ c % 2 ? 'Gynecology' : 'Pregnancy' }}</span>
              </template>
            </div>
          </template>
        </main>
      </div>

      <footer class="foot">
        <svg class="foot__logo" viewBox="0 0 15.6 40">
          <g fill="none" stroke="currentColor" stroke-width="2.3">
            <circle cx="7.8" cy="7.6" r="6.5" /><circle cx="7.8" cy="32.5" r="6.4" />
            <path d="M7.8 14.5V26M2.7 20.5H12.9" />
          </g>
        </svg>
        <div class="brand">
          <div class="brand__name"><b>Fem</b><span>Health</span></div>
          <div class="brand__tag">Where women’s health comes first</div>
        </div>
        <div v-for="k in 2" :key="k" class="foot__col">
          <h5>Lorem Ipsum</h5>
          <a v-for="l in footerLinks" :key="l">{{ l }}</a>
        </div>
      </footer>
    </section>
  </div>
</template>

<style>
html,
body {
  margin: 0;
  background: #fff;
  overflow: hidden;
}
</style>

<style scoped>
.board {
  --plum: #3d122b;
  --paper: #f5f5f5;
  --orange: #ff6200;
  zoom: 0.9309091;
  width: 4400px;
  height: 2988px;
  display: grid;
  grid-template-columns: repeat(3, 1440px);
  grid-template-rows: repeat(2, 1474px);
  gap: 40px;
  font-family: 'Open Sans', 'Noto Sans', sans-serif;
  color: #000;
  background: #fff;
}
.board * {
  box-sizing: border-box;
}
h1, h2, h3, h4, h5, p, hr {
  margin: 0;
  font-weight: inherit;
}
svg {
  display: block;
  flex: none;
}
button {
  font: inherit;
  padding: 0;
  border: 0;
}
.screen {
  display: flex;
  flex-direction: column;
  background: var(--paper);
}

/* top bar */
.topbar {
  height: 72.6px;
  flex: none;
  display: flex;
  align-items: center;
  background: var(--plum);
  color: #fff;
}
.topbar__logo {
  width: 15.6px;
  height: 40px;
  margin: 6px 194.7px 0 21.7px;
}
.search {
  width: 975px;
  height: 48px;
  display: flex;
  align-items: center;
  padding: 0 16px 0 11.6px;
  border-radius: 8px;
  background: #fff;
  color: var(--plum);
}
.search__glass {
  width: 21.5px;
  height: 21.5px;
}
.search__text {
  flex: 1;
  margin: 2px 0 0 30.5px;
  font-size: 19.5px;
  line-height: 26px;
  color: #000;
}
.search__filter {
  width: 24px;
  height: 24px;
  margin-right: 17px;
}
.search__sort {
  width: 24px;
  height: 22px;
}
.avatar {
  width: 43.6px;
  height: 43.6px;
  margin-left: 156px;
  border-radius: 50%;
  background: #f6f6f6;
}

/* body and side navigation */
.body {
  flex: 1;
  display: flex;
  min-height: 0;
}
.side {
  width: 60px;
  flex: none;
  display: flex;
  flex-direction: column;
}
.tab {
  height: 90px;
  flex: none;
  display: flex;
  flex-direction: column;
  align-items: center;
  background: var(--plum);
  color: #fff;
}
.tab.is-active {
  background: none;
  color: var(--plum);
}
.tab.is-before {
  border-bottom-right-radius: 46px;
}
.tab.is-after {
  border-top-right-radius: 46px;
}
.side__rest {
  flex: 1;
  background: var(--plum);
}
.tab--home { padding-top: 27px; gap: 3.6px; }
.tab--blog { padding-top: 29px; gap: 3.6px; }
.tab--forum { padding-top: 23px; gap: 8px; }
.tab--location { padding-top: 26.4px; gap: 3.6px; }
.tab--settings { padding-top: 29.2px; gap: 2.4px; }
.tab__label {
  font-size: 9.8px;
  line-height: 14px;
  letter-spacing: 0.1px;
}
.cut {
  fill: none;
  stroke: var(--plum);
  stroke-width: 1.8;
}
.bubble {
  fill: currentColor;
  stroke: var(--plum);
  stroke-width: 1.2;
}
.badge {
  font: 700 9px 'Open Sans', sans-serif;
  text-anchor: middle;
  fill: var(--plum);
}
.is-active .cut,
.is-active .bubble {
  stroke: var(--paper);
}
.is-active .badge {
  fill: var(--paper);
}

/* page frame */
.page {
  margin-left: 172px;
  width: 975px;
  padding-top: 42.2px;
}
.page--home { padding-top: 38.4px; }
.page--locate { padding-top: 45px; }
.page--ask { padding-top: 45.2px; }
.head {
  display: flex;
  justify-content: space-between;
  align-items: flex-start;
  height: 51px;
}
h1 {
  margin: 4.8px 0 0 -0.5px;
  font-size: 31.3px;
  font-weight: 600;
  line-height: 44px;
  color: #31051f;
  white-space: nowrap;
}
.page--home h1 { margin-left: 0.3px; letter-spacing: -0.32px; }
.page--forum h1 { letter-spacing: -0.5px; }
.page--locate h1 { margin-top: 5.4px; letter-spacing: 0.1px; }
.page--ask h1 { margin-top: 8.8px; letter-spacing: -0.5px; }
.cta {
  width: 182px;
  height: 51px;
  border-radius: 26px;
  background: var(--orange);
  color: #f6f6f6;
  font-size: 19.5px;
  line-height: 50.4px;
  letter-spacing: 0.08px;
  text-align: center;
}

/* cards */
.cards {
  display: grid;
  grid-template-columns: repeat(2, 480.5px);
  grid-auto-rows: 239.6px;
  gap: 14.4px 14px;
  margin-top: 43px;
}
.card {
  border-radius: 8px;
  background: #fff;
  box-shadow: 0 2px 4px rgba(0, 0, 0, 0.16);
  padding-top: 14.2px;
}
.card h2 {
  margin-left: 12.8px;
  font-size: 19.5px;
  font-weight: 600;
  line-height: 26px;
  letter-spacing: 0.15px;
  white-space: nowrap;
}
.excerpt {
  width: 444.8px;
  margin: 10.5px 0 0 12.4px;
  font-size: 13.7px;
  line-height: 18px;
}
.excerpt p {
  text-align: justify;
  text-align-last: justify;
}
.excerpt p:last-child {
  text-align-last: left;
}
.author {
  display: flex;
  align-items: center;
  height: 16px;
  margin: 47.2px 0 0 12.4px;
  font-size: 11.7px;
  font-weight: 600;
  line-height: 16px;
  letter-spacing: 0.18px;
}
.steth {
  width: 14px;
  height: 13.4px;
  margin: 0.5px 9px 0 1.5px;
  color: var(--plum);
}
.page--forum .author {
  letter-spacing: 0;
}
.tags {
  display: flex;
  gap: 7.6px;
  height: 20.7px;
  margin: 6.1px 0 0 12px;
}
.tag {
  border-radius: 11px;
  background: rgba(61, 18, 43, 0.2);
  color: #111;
  font-size: 9.8px;
  line-height: 20.9px;
  letter-spacing: 0.15px;
  text-align: center;
}
.tag--g { width: 69.4px; }
.tag--p { width: 64.6px; }
hr {
  height: 2px;
  border: 0;
  background: #ebebeb;
}
.card hr {
  margin-top: 4px;
}
.meta {
  display: flex;
  align-items: center;
  height: 14px;
  margin: 9.5px 24px 0 13px;
  font-size: 9.8px;
  line-height: 14px;
  color: var(--plum);
}
.eye {
  width: 11.8px;
  height: 10px;
}
.meta__views {
  width: 37.9px;
  margin-left: 5.4px;
  letter-spacing: 0.4px;
}
.meta__date {
  width: 77px;
  letter-spacing: 0.45px;
}
.mark {
  width: 13.4px;
  height: 17.4px;
  margin: 4.2px 0 0 auto;
}

/* clinic finder */
.map {
  width: 975px;
  height: 499px;
  margin-top: 43.5px;
  border-radius: 8px;
  overflow: hidden;
}
.place,
.lake,
.road,
.shield {
  font-family: Roboto, sans-serif;
  paint-order: stroke;
}
.place {
  font-size: 12.8px;
  font-weight: 500;
  fill: currentColor;
  stroke: #fff;
  stroke-width: 1.8px;
  stroke-linejoin: round;
}
.lake {
  font-size: 11.5px;
  fill: #3f86d8;
}
.road {
  font-size: 7.4px;
  fill: #666a6e;
  stroke: #f4f6f6;
  stroke-width: 1.8px;
}
.shield {
  font-size: 8.3px;
  font-weight: 500;
  fill: #55595e;
  text-anchor: middle;
}
.slate { color: #7d8287; }
.azure { color: #3a8bdb; }
.leaf { color: #3a9f5b; }
.rose { color: #ee6196; }
.slant { font-style: italic; }
.pin-no {
  font: 700 7.5px 'Open Sans', sans-serif;
  text-anchor: middle;
  fill: #31051f;
}
.label {
  display: block;
  font-size: 19.5px;
  line-height: 26px;
  letter-spacing: 0.15px;
  color: #707070;
}
.label--strong {
  margin-top: 30.7px;
  font-weight: 600;
  letter-spacing: 0;
  color: #000;
}
.field {
  border: 1px solid #e0e0e0;
  border-radius: 8px;
  background: #fff;
}
.finder {
  display: flex;
  justify-content: space-between;
  height: 49.2px;
  margin-top: 3.8px;
}
.finder__field {
  width: 806px;
  padding-left: 24px;
  font-size: 19.5px;
  line-height: 48.4px;
}
.ghost {
  width: 149px;
  border: 2px solid var(--orange);
  border-radius: 25px;
  background: #fff;
  color: var(--orange);
  font-size: 19.5px;
  line-height: 45.6px;
  text-align: center;
}
.clinics {
  display: grid;
  grid-template-columns: repeat(2, 475px);
  grid-auto-rows: 100.6px;
  gap: 19.4px 25px;
  margin-top: 29.7px;
}
.clinic {
  display: flex;
  padding: 13.3px 33.3px 0 12px;
  border-radius: 8px;
  background: #fff;
  box-shadow: 0 2px 4px rgba(0, 0, 0, 0.16);
}
.clinic__pin {
  width: 17.4px;
  height: 21.7px;
  margin-top: 2px;
}
.clinic__text {
  flex: 1;
  margin-left: 11.2px;
  white-space: nowrap;
}
.clinic h4 {
  font-size: 19.5px;
  font-weight: 600;
  line-height: 26px;
  letter-spacing: 0.1px;
}
.clinic__addr {
  margin: 7.4px 0 0 0.5px;
  font-size: 13.7px;
  line-height: 18px;
  letter-spacing: 0.24px;
}
.clinic__tel {
  margin-top: 9px;
  font-size: 11.7px;
  font-weight: 600;
  line-height: 16px;
  letter-spacing: 0.65px;
}
.clinic__go {
  width: 29px;
  height: 29px;
  margin-top: 23px;
  color: var(--plum);
}

/* article */
.story__title {
  margin: 43.8px 0 0 -0.6px;
  font-size: 19.5px;
  font-weight: 600;
  line-height: 26px;
  letter-spacing: 0.2px;
  white-space: nowrap;
}
.author--story {
  margin: 18px 0 0;
}
.author--story .steth {
  width: 12px;
  height: 12.8px;
  margin: 0 4.5px 0 1px;
}
.story__rule {
  width: 350px;
  margin-top: 11px;
  background: #e4e4e4;
}
.meta--story {
  margin: 8.9px 3.5px 0 1px;
}
.meta--story .mark {
  margin-top: -1px;
}
.tags--story {
  gap: 7.8px;
  margin: 16.1px 0 0;
}
.story {
  width: 985px;
  height: 552px;
  margin-top: 18px;
  padding: 12.8px 0 0 12.7px;
  background: #fff;
  box-shadow: 0 1px 4px rgba(0, 0, 0, 0.16);
  font-size: 13.7px;
  line-height: 17.98px;
  letter-spacing: 0.05px;
}
.story p {
  margin-bottom: 17.98px;
  white-space: pre;
}

/* question form */
.ask__sub {
  margin-top: 37.1px;
  font-size: 19.5px;
  font-weight: 600;
  line-height: 26px;
  color: #31051f;
}
.ask__l1 { margin: 40.2px 0 0 0.4px; }
.ask__l2 { margin: 22.3px 0 0 -0.4px; }
.ask__l3 { margin-top: 19.4px; }
.ask__title,
.ask__desc {
  color: #777;
  font-size: 13.7px;
}
.ask__title {
  height: 51.7px;
  margin-top: 8.8px;
  padding-left: 11px;
  line-height: 50.3px;
}
.ask__desc {
  height: 415.4px;
  margin-top: 9.3px;
  padding: 19.2px 0 0 12px;
  line-height: 18px;
}
.picker {
  display: grid;
  grid-template-columns: repeat(4, 92.7px 86.3px);
  grid-auto-rows: 28px;
  gap: 10px 9.95px;
  height: 287px;
  margin-top: 13.9px;
  padding: 17px 0 0 14.2px;
  border-radius: 8px;
  background: #fff;
}
.chip {
  border-radius: 14px;
  background: #d8d0d5;
  color: #111;
  font-size: 9.8px;
  line-height: 28.6px;
  letter-spacing: 0.15px;
  text-align: center;
}
.chip.is-picked {
  background: var(--plum);
  color: #d8d0d5;
}

/* footer */
.foot {
  height: 221.5px;
  flex: none;
  display: flex;
  align-items: flex-start;
  background: var(--plum);
  color: #fff;
  font-family: Roboto, sans-serif;
}
.foot__logo {
  width: 21.8px;
  height: 55.9px;
  margin: 115.2px 0 0 44px;
}
.brand {
  width: 397px;
  margin: 110.4px 0 0 28.2px;
  white-space: nowrap;
}
.brand__name {
  font-size: 47.2px;
  line-height: 48px;
}
.brand__name b {
  font-weight: 700;
}
.brand__name span {
  margin-left: 3px;
  font-weight: 200;
  letter-spacing: 1px;
}
.brand__tag {
  margin: -0.6px 0 0 5.6px;
  font-size: 14.55px;
  line-height: 18px;
}
.foot__col {
  width: 398px;
  margin-top: 89px;
}
.foot__col h5 {
  margin-left: 3px;
  font-size: 18px;
  line-height: 22px;
}
.foot__col h5 + a {
  margin-top: 7.6px;
}
.foot__col a {
  display: block;
  font-size: 12px;
  line-height: 17px;
}
</style>
